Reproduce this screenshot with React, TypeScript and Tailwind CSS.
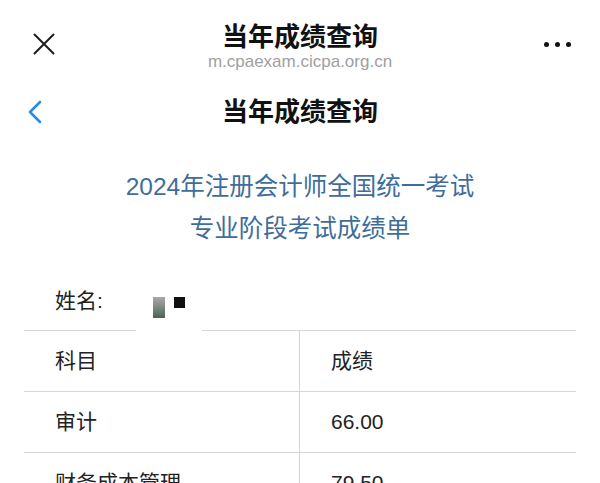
const scores = [
  { subject: "审计", score: "66.00" },
  { subject: "财务成本管理", score: "79.50" },
];

const font = "font-['Liberation_Sans','Noto_Sans_CJK_SC',sans-serif]";

function CloseIcon() {
  return (
    <svg width="22" height="22" viewBox="0 0 22 22" fill="none" stroke="#1c1c1c" strokeWidth="2" strokeLinecap="round">
      <path d="M1.5 1.5 20.5 20.5M20.5 1.5 1.5 20.5" />
    </svg>
  );
}

function BackIcon() {
  return (
    <svg width="16" height="24" viewBox="0 0 16 24" fill="none" stroke="#2a8be6" strokeWidth="2.6" strokeLinecap="round" strokeLinejoin="round">
      <path d="M13 2 3 12l10 10" />
    </svg>
  );
}

export default function App() {
  return (
    <div className={`min-h-screen bg-white text-[#1a1a1a] ${font}`}>
      {/* browser top bar */}
      <div className="flex h-[84px] items-start">
        <div className="w-[120px] pl-[33px] pt-[33px]">
          <CloseIcon />
        </div>
        <div className="flex flex-1 flex-col items-center pt-[22px]">
          <div className="text-[26px] font-semibold leading-[30px] text-[#111]">当年成绩查询</div>
          <div className="text-[17px] leading-[20px] text-[#a0a0a0]">m.cpaexam.cicpa.org.cn</div>
        </div>
        <div className="flex w-[120px] justify-end gap-[6px] pr-[29px] pt-[42px]">
          <span className="h-[5px] w-[5px] rounded-full bg-[#111]" />
          <span className="h-[5px] w-[5px] rounded-full bg-[#111]" />
          <span className="h-[5px] w-[5px] rounded-full bg-[#111]" />
        </div>
      </div>

      {/* page header */}
      <div className="flex h-[56px] items-center">
        <div className="w-[120px] pl-[27px]">
          <BackIcon />
        </div>
        <div className="flex-1 text-center text-[26px] font-semibold leading-[30px] text-[#111]">当年成绩查询</div>
        <div className="w-[120px]" />
      </div>

      <div className="mt-[26px] text-center text-[24.5px] leading-[42px] text-[#3e6d9c]">
        <div>2024年注册会计师全国统一考试</div>
        <div>专业阶段考试成绩单</div>
      </div>

      <div className="mt-[21px] px-6 text-[21px] text-[#222]">
        <div className="relative flex h-[60px] items-center border-b border-[#d6d6d6] pl-[31px]">
          姓名:
          <div className="absolute left-[112px] top-[20px] h-[41px] w-[66px] bg-white">
            <div className="absolute left-[17px] top-[6px] h-[21px] w-[12px] bg-gradient-to-b from-[#a8a8a8] via-[#7a8a82] to-[#4f6157]" />
            <div className="absolute left-[38px] top-[6px] h-[11px] w-[11px] bg-[#111]" />
          </div>
        </div>
        <div className="grid grid-cols-[276px_1fr] border-b border-[#d6d6d6]">
          <div className="flex h-[60px] items-center border-r border-[#d6d6d6] pl-[31px]">科目</div>
          <div className="flex h-[60px] items-center pl-[31px]">成绩</div>
        </div>
        {scores.map((row) => (
          <div key={row.subject} className="grid grid-cols-[276px_1fr] border-b border-[#d6d6d6]">
            <div className="flex h-[60px] items-center border-r border-[#d6d6d6] pl-[31px]">{row.subject}</div>
            <div className="flex h-[60px] items-center pl-[31px]">{row.score}</div>
          </div>
        ))}
      </div>
    </div>
  );
}
